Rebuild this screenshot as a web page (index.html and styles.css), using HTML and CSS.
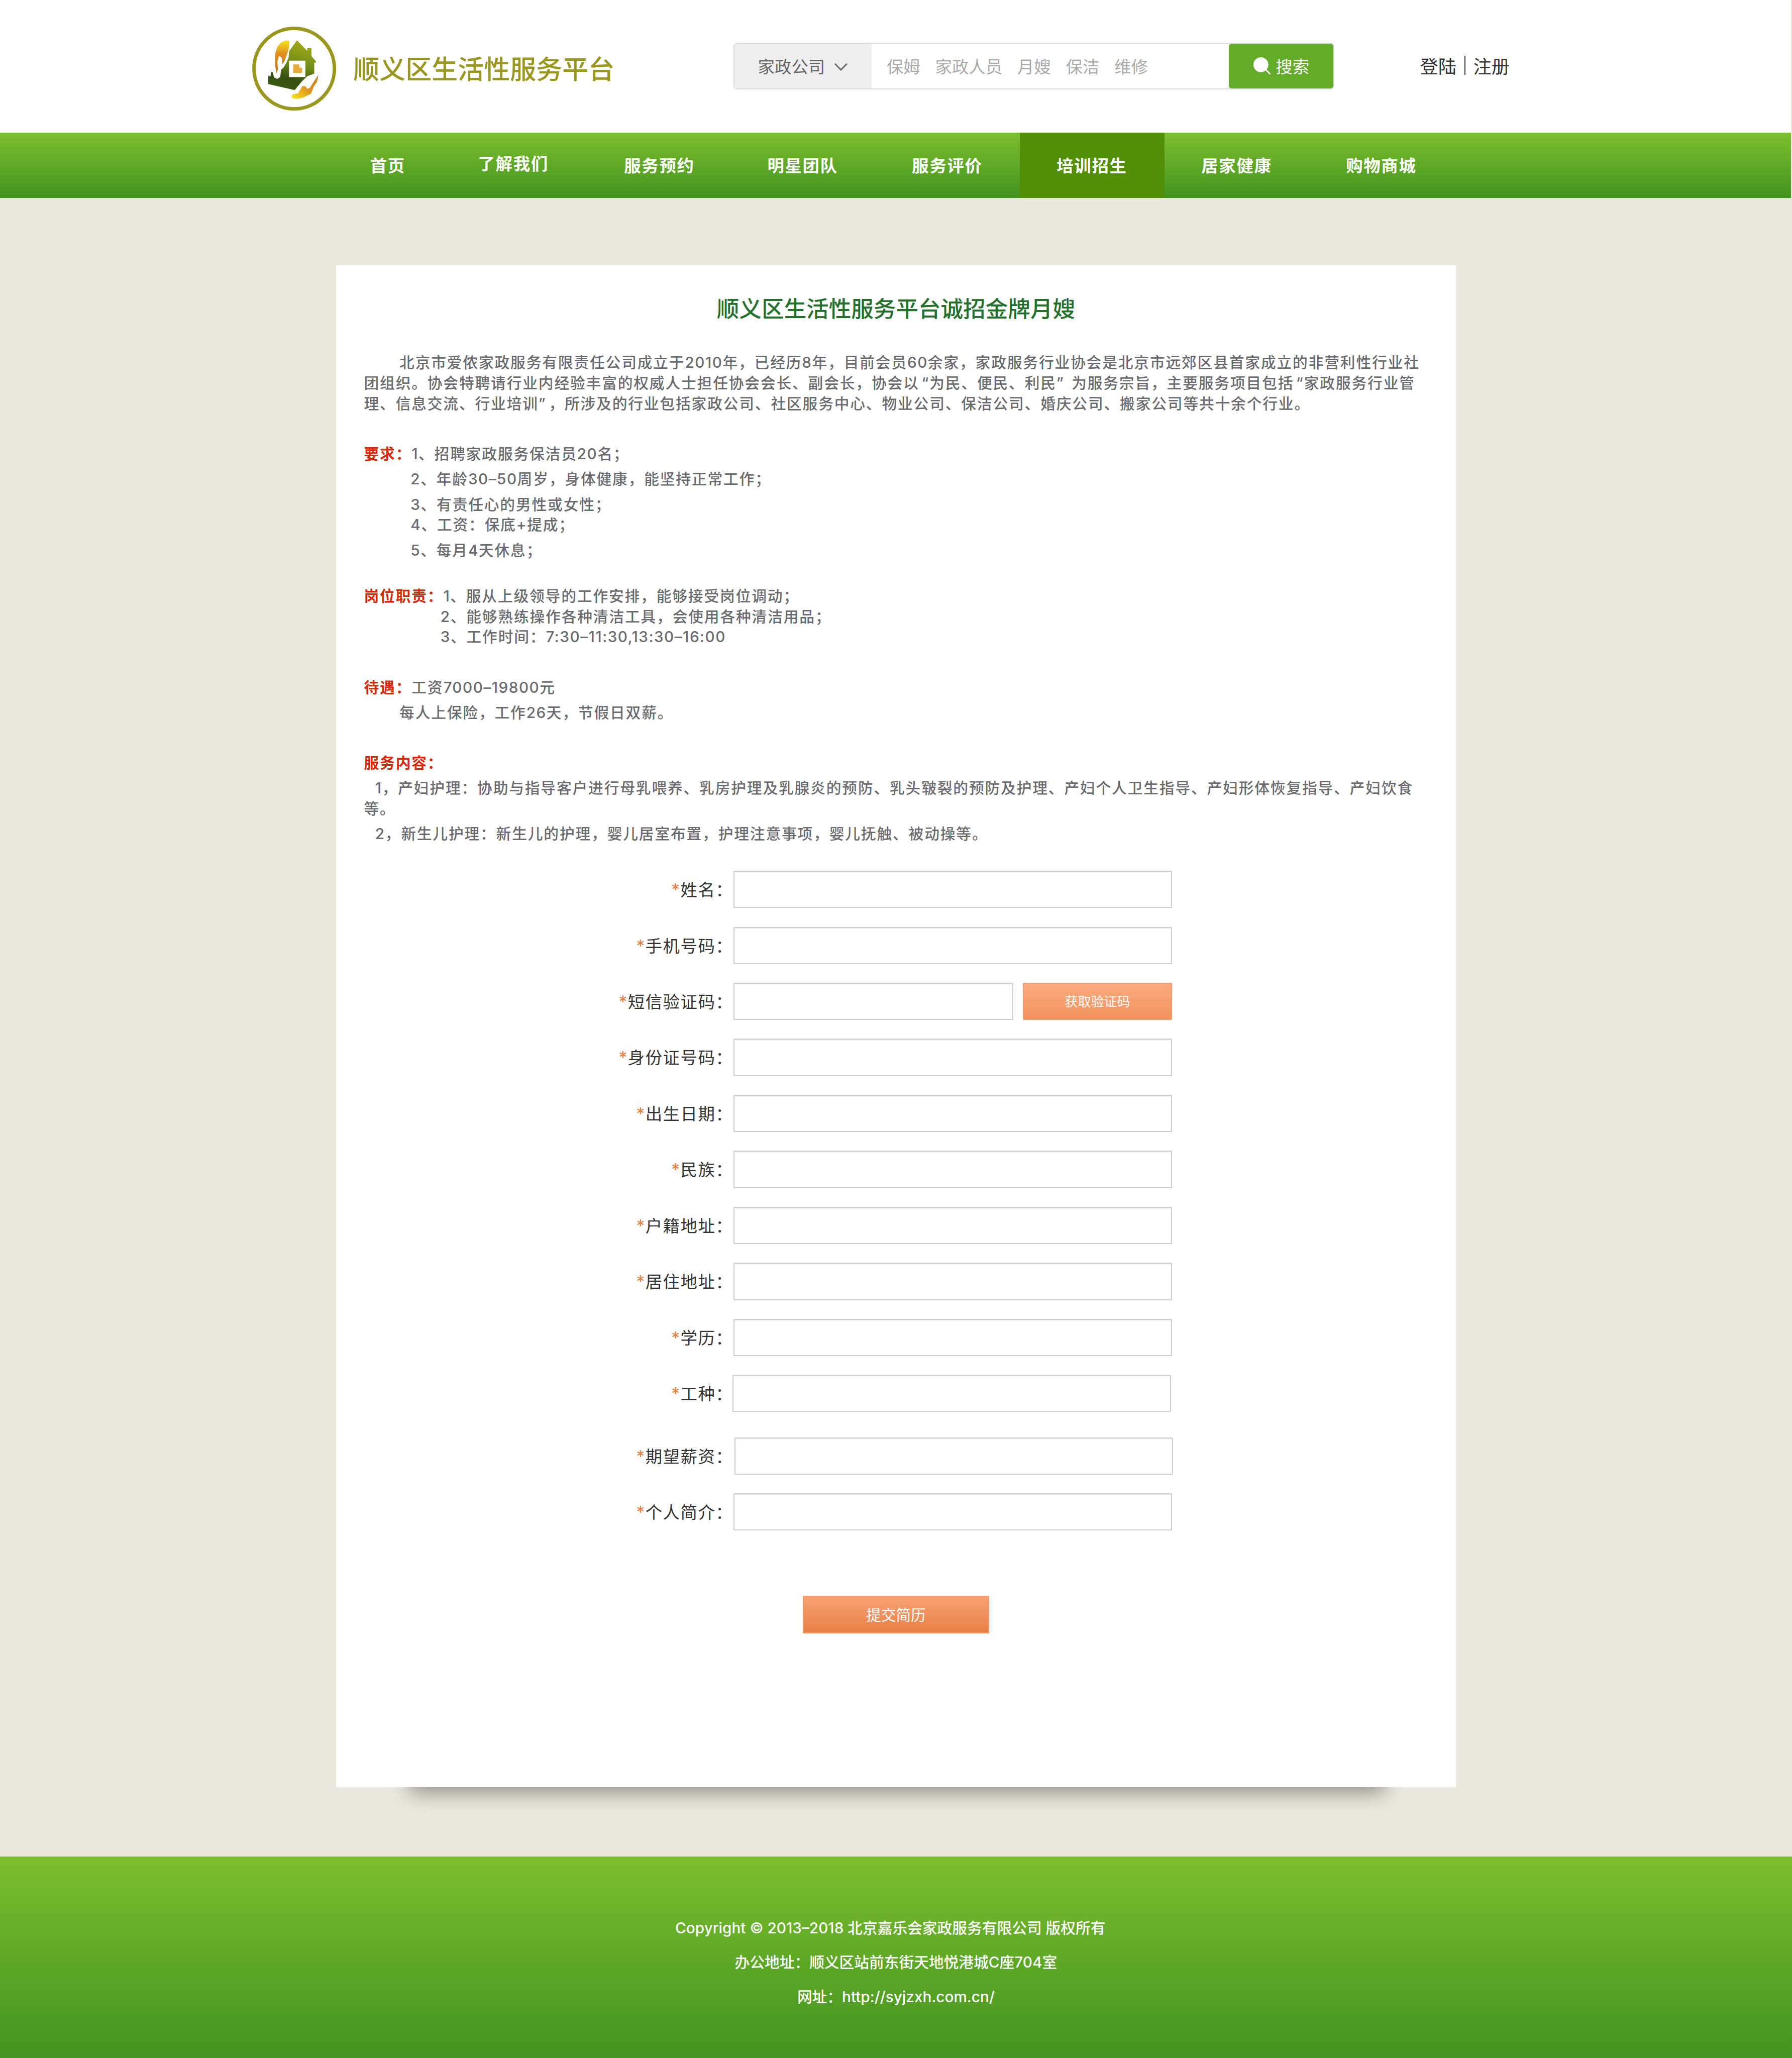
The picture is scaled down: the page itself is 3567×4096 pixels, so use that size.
FILE: index.html
```html
<!DOCTYPE html>
<html lang="zh-CN">
<head>
<meta charset="utf-8">
<title>顺义区生活性服务平台</title>
<link rel="stylesheet" href="styles.css">
</head>
<body>
<header class="header">
  <svg class="logo" viewBox="0 0 180 180" aria-hidden="true">
    <defs>
      <linearGradient id="roof" x1="0.6" y1="0" x2="0.3" y2="1">
        <stop offset="0" stop-color="#a3ab14"/><stop offset="0.45" stop-color="#6f8c18"/><stop offset="0.75" stop-color="#365010"/><stop offset="1" stop-color="#3a5a12"/>
      </linearGradient>
      <linearGradient id="handTop" x1="0" y1="0" x2="0" y2="1">
        <stop offset="0" stop-color="#f6e51c"/><stop offset="0.4" stop-color="#df8f1e"/><stop offset="1" stop-color="#c9741c"/>
      </linearGradient>
      <linearGradient id="handBottom" x1="1" y1="0" x2="0" y2="1">
        <stop offset="0" stop-color="#c9741c"/><stop offset="0.5" stop-color="#df9420"/><stop offset="1" stop-color="#f8ea1c"/>
      </linearGradient>
    </defs>
    <circle cx="90" cy="90" r="86.2" fill="#fff" stroke="#9a971e" stroke-width="7.4"/>
    <path fill="url(#roof)" d="M96 29 L118 52 V46 H127 V63 L137 75 V77 H133 V101 L118 106 L106 118 L91 136 L34 123 V105 L39 107 L41 97 L44 98 L47 109 L54 112 L60 108 L62 92 L67 88 L73 78 L78 66 L79 53 Z"/>
    <path fill="url(#handTop)" d="M80 30 L79 45 L75 58 L70 72 L65 81 L63 66 L57 63 L54 75 L55 92 L52 100 L49 82 L49 58 L54 43 L62 34 L71 30 Z"/>
    <path fill="url(#handBottom)" d="M142 103 L139 118 L132 128 L126 144 L115 149 L107 153 L94 155 L84 152 L86 145 L98 143 L108 127 L115 128 L117 133 L123 132 L132 118 Z"/>
    <path fill="#fff" d="M79 73 H114 V108 H79 Z"/>
    <path fill="#e7a93a" d="M88 81 H101 V88 H107 V99 H88 Z"/>
  </svg>
  <h1 class="brand">顺义区生活性服务平台</h1>
  <div class="search">
    <div class="search-type">家政公司
      <svg class="chevron" viewBox="0 0 30 18" aria-hidden="true"><path d="M2 2 L15 15 L28 2" fill="none" stroke="#666" stroke-width="3"/></svg>
    </div>
    <div class="search-words"><span>保姆</span><span>家政人员</span><span>月嫂</span><span>保洁</span><span>维修</span></div>
    <div class="search-btn">
      <svg class="lens" viewBox="0 0 38 38" aria-hidden="true"><circle cx="16" cy="16" r="16" fill="#fff"/><path d="M25 25 L36 36" stroke="#fff" stroke-width="3"/></svg>搜索</div>
  </div>
  <div class="account"><span>登陆</span><i class="bar"></i><span>注册</span></div>
</header>
<nav class="nav">
  <a class="nav-item first">首页</a>
  <a class="nav-item raised">了解我们</a>
  <a class="nav-item shifted">服务预约</a>
  <a class="nav-item">明星团队</a>
  <a class="nav-item">服务评价</a>
  <a class="nav-item active">培训招生</a>
  <a class="nav-item">居家健康</a>
  <a class="nav-item">购物商城</a>
</nav>
<main class="main">
  <section class="card">
    <h2 class="title">顺义区生活性服务平台诚招金牌月嫂</h2>
    <div class="article">
      <p class="in-76">北京市爱侬家政服务有限责任公司成立于<span class="n">2010</span>年，已经历<span class="n">8</span>年，目前会员<span class="n">60</span>余家，家政服务行业协会是北京市远郊区县首家成立的非营利性行业社</p>
      <p>团组织。协会特聘请行业内经验丰富的权威人士担任协会会长、副会长，协会以<span class="quote-open">“</span>为民、便民、利民<span class="quote">”</span> 为服务宗旨，主要服务项目包括<span class="quote-open">“</span>家政服务行业管</p>
      <p>理、信息交流、行业培训<span class="quote">”</span>，所涉及的行业包括家政公司、社区服务中心、物业公司、保洁公司、婚庆公司、搬家公司等共十余个行业。</p>
      <p class="gap-l"><b>要求：</b><span class="n">1</span>、招聘家政服务保洁员<span class="n">20</span>名；</p>
      <p class="gap-s in-100"><span class="n">2</span>、年龄<span class="n">30–50</span>周岁，身体健康，能坚持正常工作；</p>
      <p class="gap-s in-100"><span class="n">3</span>、有责任心的男性或女性；</p>
      <p class="in-100"><span class="n">4</span>、工资：保底<span class="n">+</span>提成；</p>
      <p class="gap-s in-100"><span class="n">5</span>、每月<span class="n">4</span>天休息；</p>
      <p class="gap-m"><b>岗位职责：</b><span class="n">1</span>、服从上级领导的工作安排，能够接受岗位调动；</p>
      <p class="in-164"><span class="n">2</span>、能够熟练操作各种清洁工具，会使用各种清洁用品；</p>
      <p class="in-164"><span class="n">3</span>、工作时间：<span class="n">7:30–11:30,13:30–16:00</span></p>
      <p class="gap-l"><b>待遇：</b>工资<span class="n">7000–19800</span>元</p>
      <p class="gap-s in-76">每人上保险，工作<span class="n">26</span>天，节假日双薪。</p>
      <p class="gap-l"><b>服务内容：</b></p>
      <p class="gap-s in-24"><span class="n">1</span>，产妇护理：协助与指导客户进行母乳喂养、乳房护理及乳腺炎的预防、乳头皲裂的预防及护理、产妇个人卫生指导、产妇形体恢复指导、产妇饮食</p>
      <p>等。</p>
      <p class="gap-s in-24"><span class="n">2</span>，新生儿护理：新生儿的护理，婴儿居室布置，护理注意事项，婴儿抚触、被动操等。</p>
    </div>
    <form class="form">
      <div class="row"><label><i>*</i>姓名：</label><div class="input"></div></div>
      <div class="row"><label><i>*</i>手机号码：</label><div class="input"></div></div>
      <div class="row"><label><i>*</i>短信验证码：</label><div class="input short"></div><div class="code-btn">获取验证码</div></div>
      <div class="row"><label><i>*</i>身份证号码：</label><div class="input"></div></div>
      <div class="row"><label><i>*</i>出生日期：</label><div class="input"></div></div>
      <div class="row"><label><i>*</i>民族：</label><div class="input"></div></div>
      <div class="row"><label><i>*</i>户籍地址：</label><div class="input"></div></div>
      <div class="row"><label><i>*</i>居住地址：</label><div class="input"></div></div>
      <div class="row"><label><i>*</i>学历：</label><div class="input"></div></div>
      <div class="row"><label><i>*</i>工种：</label><div class="input nudge-left"></div></div>
      <div class="row spaced"><label><i>*</i>期望薪资：</label><div class="input nudge-right"></div></div>
      <div class="row"><label><i>*</i>个人简介：</label><div class="input"></div></div>
      <div class="submit">提交简历</div>
    </form>
  </section>
</main>
<footer class="footer">
  <p class="copyright">Copyright © 2013–2018 北京嘉乐会家政服务有限公司 版权所有</p>
  <p>办公地址：顺义区站前东街天地悦港城C座704室</p>
  <p>网址：http://syjzxh.com.cn/</p>
</footer>
</body>
</html>
```
FILE: styles.css
```css
/* 1rem = 100 design pixels; the design is 3840 wide */
html { font-size: 92.885px; }
* { box-sizing: border-box; margin: 0; padding: 0; }
body {
  width: 38.4rem;
  height: 44.1rem;
  overflow: hidden;
  display: flex;
  flex-direction: column;
  background: #ebe9dd;
  font-family: Inter, "Noto Sans CJK SC", sans-serif;
  font-size: 0.36rem;
  white-space: nowrap;
}
i { font-style: normal; }

.header {
  width: 38.38rem;
  height: 2.84rem;
  flex: none;
  display: flex;
  align-items: flex-start;
  padding-left: 5.4rem;
  background: #fff;
}
.logo { width: 1.8rem; height: 1.8rem; margin-top: 0.57rem; }
.brand {
  width: 5.98rem;
  margin: 1.1rem 0 0 0.37rem;
  font-size: 0.56rem;
  line-height: 0.8rem;
  font-weight: 500;
  color: #9a971e;
}
.search {
  display: flex;
  width: 12.88rem;
  height: 1rem;
  margin: 0.92rem 0 0 2.17rem;
  border: 2px solid #dcdcdc;
  border-radius: 0.08rem;
  line-height: 0.98rem;
}
.search-type {
  width: 2.94rem;
  display: flex;
  align-items: center;
  padding: 0.03rem 0 0 0.5rem;
  background: #eee;
  color: #666;
}
.chevron { width: 0.3rem; height: 0.18rem; margin-left: 0.19rem; }
.search-words {
  flex: 1;
  display: flex;
  gap: 0.32rem;
  padding: 0.01rem 0 0 0.32rem;
  color: #aaa;
}
.search-btn {
  width: 2.24rem;
  display: flex;
  align-items: center;
  padding: 0.03rem 0 0 0.52rem;
  border-radius: 0.06rem;
  background: #64ab29;
  color: #fff;
}
.lens { width: 0.38rem; height: 0.38rem; margin: -0.04rem 0.1rem 0 0; }
.account {
  display: flex;
  align-items: center;
  height: 1rem;
  margin: 0.9rem 0 0 1.83rem;
  font-size: 0.39rem;
  color: #333;
}
.bar { width: 2px; height: 0.41rem; margin: 0 0.17rem; background: #333; }

.nav {
  width: 38.38rem;
  flex: none;
  display: flex;
  height: 1.4rem;
  padding-left: 7.16rem;
  background: linear-gradient(#7dbf2e, #429320);
  color: #fff;
  font-weight: 700;
  letter-spacing: 0.018rem;
  line-height: 1.43rem;
  text-align: center;
}
.nav-item { width: 3.1rem; padding-right: 0.02rem; }
.nav-item.first { width: 2.3rem; padding-right: 0; }
.nav-item.raised { line-height: 1.35rem; }
.nav-item.shifted { padding: 0 0 0 0.04rem; }
.nav-item.active { background: #528f06; }

.main { flex: none; height: 35.54rem; padding: 1.44rem 7.2rem 0; }
.card {
  height: 32.62rem;
  background: #fff;
  box-shadow: 0.02rem 1.66rem 0.42rem -1.55rem rgba(0, 0, 0, 0.4);
}
.title {
  padding-top: 0.6rem;
  font-size: 0.48rem;
  line-height: 0.7rem;
  font-weight: 500;
  text-align: center;
  color: #22702a;
}
.article {
  height: 11.11rem;
  padding: 0.57rem 0 0 0.6rem;
  font-size: 0.32rem;
  line-height: 0.44rem;
  letter-spacing: 0.02rem;
  font-weight: 500;
  color: #6a6b6e;
}
.article b { font-weight: 700; color: #d92806; }
.n { letter-spacing: 0.016rem; }
.quote { letter-spacing: 0.07rem; }
.quote-open { margin-left: 0.05rem; }
.gap-s { margin-top: 0.1rem; }
.gap-m { margin-top: 0.54rem; }
.gap-l { margin-top: 0.64rem; }
.in-24 { padding-left: 0.24rem; }
.in-76 { padding-left: 0.76rem; }
.in-100 { padding-left: 1rem; }
.in-164 { padding-left: 1.64rem; }

.form { padding-top: 0.57rem; }
.row { display: flex; height: 0.8rem; margin-bottom: 0.4rem; }
.row.spaced { margin-top: 0.54rem; }
.row label {
  width: 8.51rem;
  margin-right: 0.01rem;
  text-align: right;
  line-height: 0.83rem;
  letter-spacing: 0.016rem;
  color: #333;
}
.row label i { color: #e67e3c; }
.input {
  width: 9.4rem;
  border: 2px solid #cfcfcf;
  border-radius: 0.02rem;
  box-shadow: inset 0 0.01rem 0.02rem rgba(0, 0, 0, 0.12);
}
.input.short { width: 6rem; }
.nudge-left { margin-left: -0.02rem; }
.nudge-right { margin-left: 0.02rem; }
.code-btn {
  width: 3.2rem;
  margin-left: 0.2rem;
  border: 2px solid #f09c6e;
  border-radius: 0.03rem;
  background: linear-gradient(#fcab80, #f3925c);
  color: #fff;
  font-size: 0.28rem;
  line-height: 0.78rem;
  text-align: center;
}
.submit {
  width: 4rem;
  height: 0.8rem;
  margin: 1.4rem auto 0;
  border: 2px solid #f0996c;
  border-radius: 0.02rem;
  background: linear-gradient(#f8a273, #e87f45);
  color: #fff;
  font-size: 0.32rem;
  line-height: 0.79rem;
  text-align: center;
}

.footer {
  flex: 1;
  padding-top: 1.16rem;
  background: linear-gradient(#7dbf2e, #429320);
  color: #fff;
  font-size: 0.32rem;
  font-weight: 500;
  line-height: 0.74rem;
  text-align: center;
}
.copyright { padding-right: 0.24rem; }
```
